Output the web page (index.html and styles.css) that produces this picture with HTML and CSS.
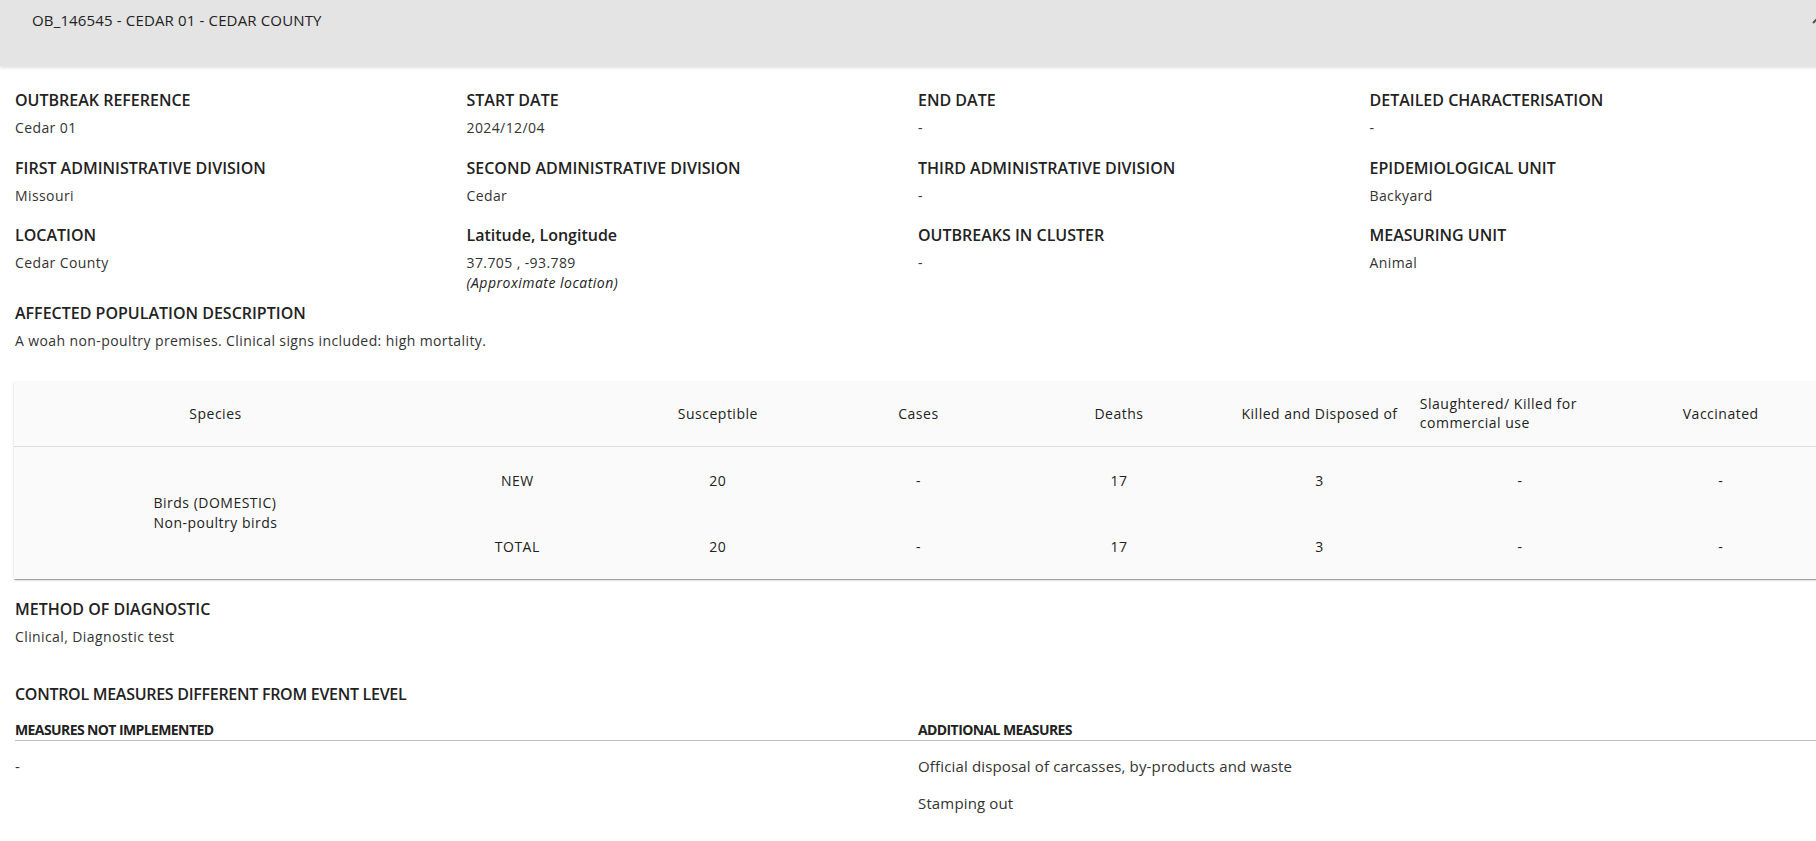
FILE: index.html
```html
<!DOCTYPE html>
<html lang="en">
<head>
  <meta charset="UTF-8">
  <title>OB_146545 - Cedar 01</title>
  <link rel="stylesheet" href="styles.css">
</head>
<body>
  <div class="page">
    <div class="panel-head">
      <span class="panel-title">OB_146545 - CEDAR 01 - CEDAR COUNTY</span>
      <svg class="chevron" width="16" height="16" viewBox="0 0 16 16">
        <path d="M3 10 L8 5 L13 10" fill="none" stroke="#555" stroke-width="2"/>
      </svg>
    </div>

    <div class="panel-body">
      <div class="fields">
        <div class="field">
          <div class="label">OUTBREAK REFERENCE</div>
          <div class="value">Cedar 01</div>
        </div>
        <div class="field">
          <div class="label">START DATE</div>
          <div class="value">2024/12/04</div>
        </div>
        <div class="field">
          <div class="label">END DATE</div>
          <div class="value">-</div>
        </div>
        <div class="field">
          <div class="label">DETAILED CHARACTERISATION</div>
          <div class="value">-</div>
        </div>

        <div class="field">
          <div class="label">FIRST ADMINISTRATIVE DIVISION</div>
          <div class="value">Missouri</div>
        </div>
        <div class="field">
          <div class="label">SECOND ADMINISTRATIVE DIVISION</div>
          <div class="value">Cedar</div>
        </div>
        <div class="field">
          <div class="label">THIRD ADMINISTRATIVE DIVISION</div>
          <div class="value">-</div>
        </div>
        <div class="field">
          <div class="label">EPIDEMIOLOGICAL UNIT</div>
          <div class="value">Backyard</div>
        </div>

        <div class="field">
          <div class="label">LOCATION</div>
          <div class="value">Cedar County</div>
        </div>
        <div class="field">
          <div class="label">Latitude, Longitude</div>
          <div class="value">37.705 , -93.789</div>
          <div class="approx">(Approximate location)</div>
        </div>
        <div class="field">
          <div class="label">OUTBREAKS IN CLUSTER</div>
          <div class="value">-</div>
        </div>
        <div class="field">
          <div class="label">MEASURING UNIT</div>
          <div class="value">Animal</div>
        </div>
      </div>

      <div class="field description">
        <div class="label">AFFECTED POPULATION DESCRIPTION</div>
        <div class="value">A woah non-poultry premises. Clinical signs included: high mortality.</div>
      </div>

      <table class="species-table">
        <thead>
          <tr>
            <th class="col-species">Species</th>
            <th></th>
            <th>Susceptible</th>
            <th>Cases</th>
            <th>Deaths</th>
            <th>Killed and Disposed of</th>
            <th><span class="wrap">Slaughtered/ Killed for commercial use</span></th>
            <th>Vaccinated</th>
          </tr>
        </thead>
        <tbody>
          <tr>
            <td rowspan="2"><span class="species-name">Birds (DOMESTIC)<br>Non-poultry birds</span></td>
            <td>NEW</td>
            <td>20</td>
            <td>-</td>
            <td>17</td>
            <td>3</td>
            <td>-</td>
            <td>-</td>
          </tr>
          <tr>
            <td>TOTAL</td>
            <td>20</td>
            <td>-</td>
            <td>17</td>
            <td>3</td>
            <td>-</td>
            <td>-</td>
          </tr>
        </tbody>
      </table>

      <div class="field diagnostic">
        <div class="label">METHOD OF DIAGNOSTIC</div>
        <div class="value">Clinical, Diagnostic test</div>
      </div>

      <div class="label control-title">CONTROL MEASURES DIFFERENT FROM EVENT LEVEL</div>
      <div class="measures">
        <div class="measure-col">
          <div class="measure-head">MEASURES NOT IMPLEMENTED</div>
          <div class="measure-item">-</div>
        </div>
        <div class="measure-col">
          <div class="measure-head">ADDITIONAL MEASURES</div>
          <div class="measure-item">Official disposal of carcasses, by-products and waste</div>
          <div class="measure-item">Stamping out</div>
        </div>
      </div>
    </div>
  </div>
</body>
</html>
```

FILE: styles.css
```css
body {
  margin: 0;
  font-family: "Open Sans", "Noto Sans", sans-serif;
  color: #222;
  background: white;
  overflow: hidden;
}
.page {
  width: 1821px;
}
.panel-head {
  display: flex;
  justify-content: space-between;
  align-items: flex-start;
  height: 66px;
  padding: 10px 0 0 32px;
  box-sizing: border-box;
  background: #e4e4e4;
  box-shadow: 0 2px 3px rgba(0,0,0,0.12);
}
.panel-title {
  font-size: 15px;
  letter-spacing: 0.15px;
  line-height: 20px;
  color: #222;
}
.chevron {
  margin-top: 3px;
  margin-right: -5px;
}
.panel-body {
  padding: 22px 0 0 15px;
}
.fields {
  display: grid;
  grid-template-columns: repeat(4, 451.5px);
  row-gap: 17.5px;
}
.label {
  font-size: 16px;
  font-weight: 600;
  line-height: 24px;
  color: #222;
}
.value {
  font-size: 14px;
  letter-spacing: 0.4px;
  line-height: 21px;
  margin-top: 5px;
  color: #333;
}
.approx {
  font-size: 14px;
  font-style: italic;
  letter-spacing: 0.5px;
  line-height: 20px;
  color: #222;
}
.description {
  margin-top: 8px;
}
.species-table {
  margin-top: 31px;
  margin-left: -1px;
  width: 1807px;
  border-collapse: collapse;
  table-layout: fixed;
  background: #fafafa;
  box-shadow: 0 2px 1px -1px rgba(0,0,0,0.2), 0 1px 1px 0 rgba(0,0,0,0.14), 0 1px 3px 0 rgba(0,0,0,0.12);
  font-size: 14px;
  letter-spacing: 0.5px;
  color: #222;
}
.species-table th {
  height: 62px;
  font-weight: 400;
  text-align: center;
  padding: 0 0 2px;
  border-bottom: 1px solid #dcdcdc;
}
.species-table th.col-species {
  width: 403px;
}
.species-table th .wrap {
  display: block;
  text-align: left;
  line-height: 19px;
}
.species-table td {
  height: 66px;
  text-align: center;
  padding: 0;
}
.species-name {
  display: inline-block;
  text-align: left;
  line-height: 20px;
}
.diagnostic {
  margin-top: 18px;
}
.control-title {
  margin-top: 35px;
  letter-spacing: -0.28px;
}
.measures {
  display: grid;
  grid-template-columns: 903px 903px;
  margin-top: 14px;
}
.measure-head {
  font-size: 14px;
  font-weight: 700;
  letter-spacing: -0.6px;
  line-height: 20px;
  border-bottom: 1px solid #bdbdbd;
}
.measure-item {
  font-size: 15px;
  letter-spacing: 0.15px;
  line-height: 20px;
  margin-top: 15px;
  color: #333;
}
.measure-item + .measure-item {
  margin-top: 17px;
}
```
